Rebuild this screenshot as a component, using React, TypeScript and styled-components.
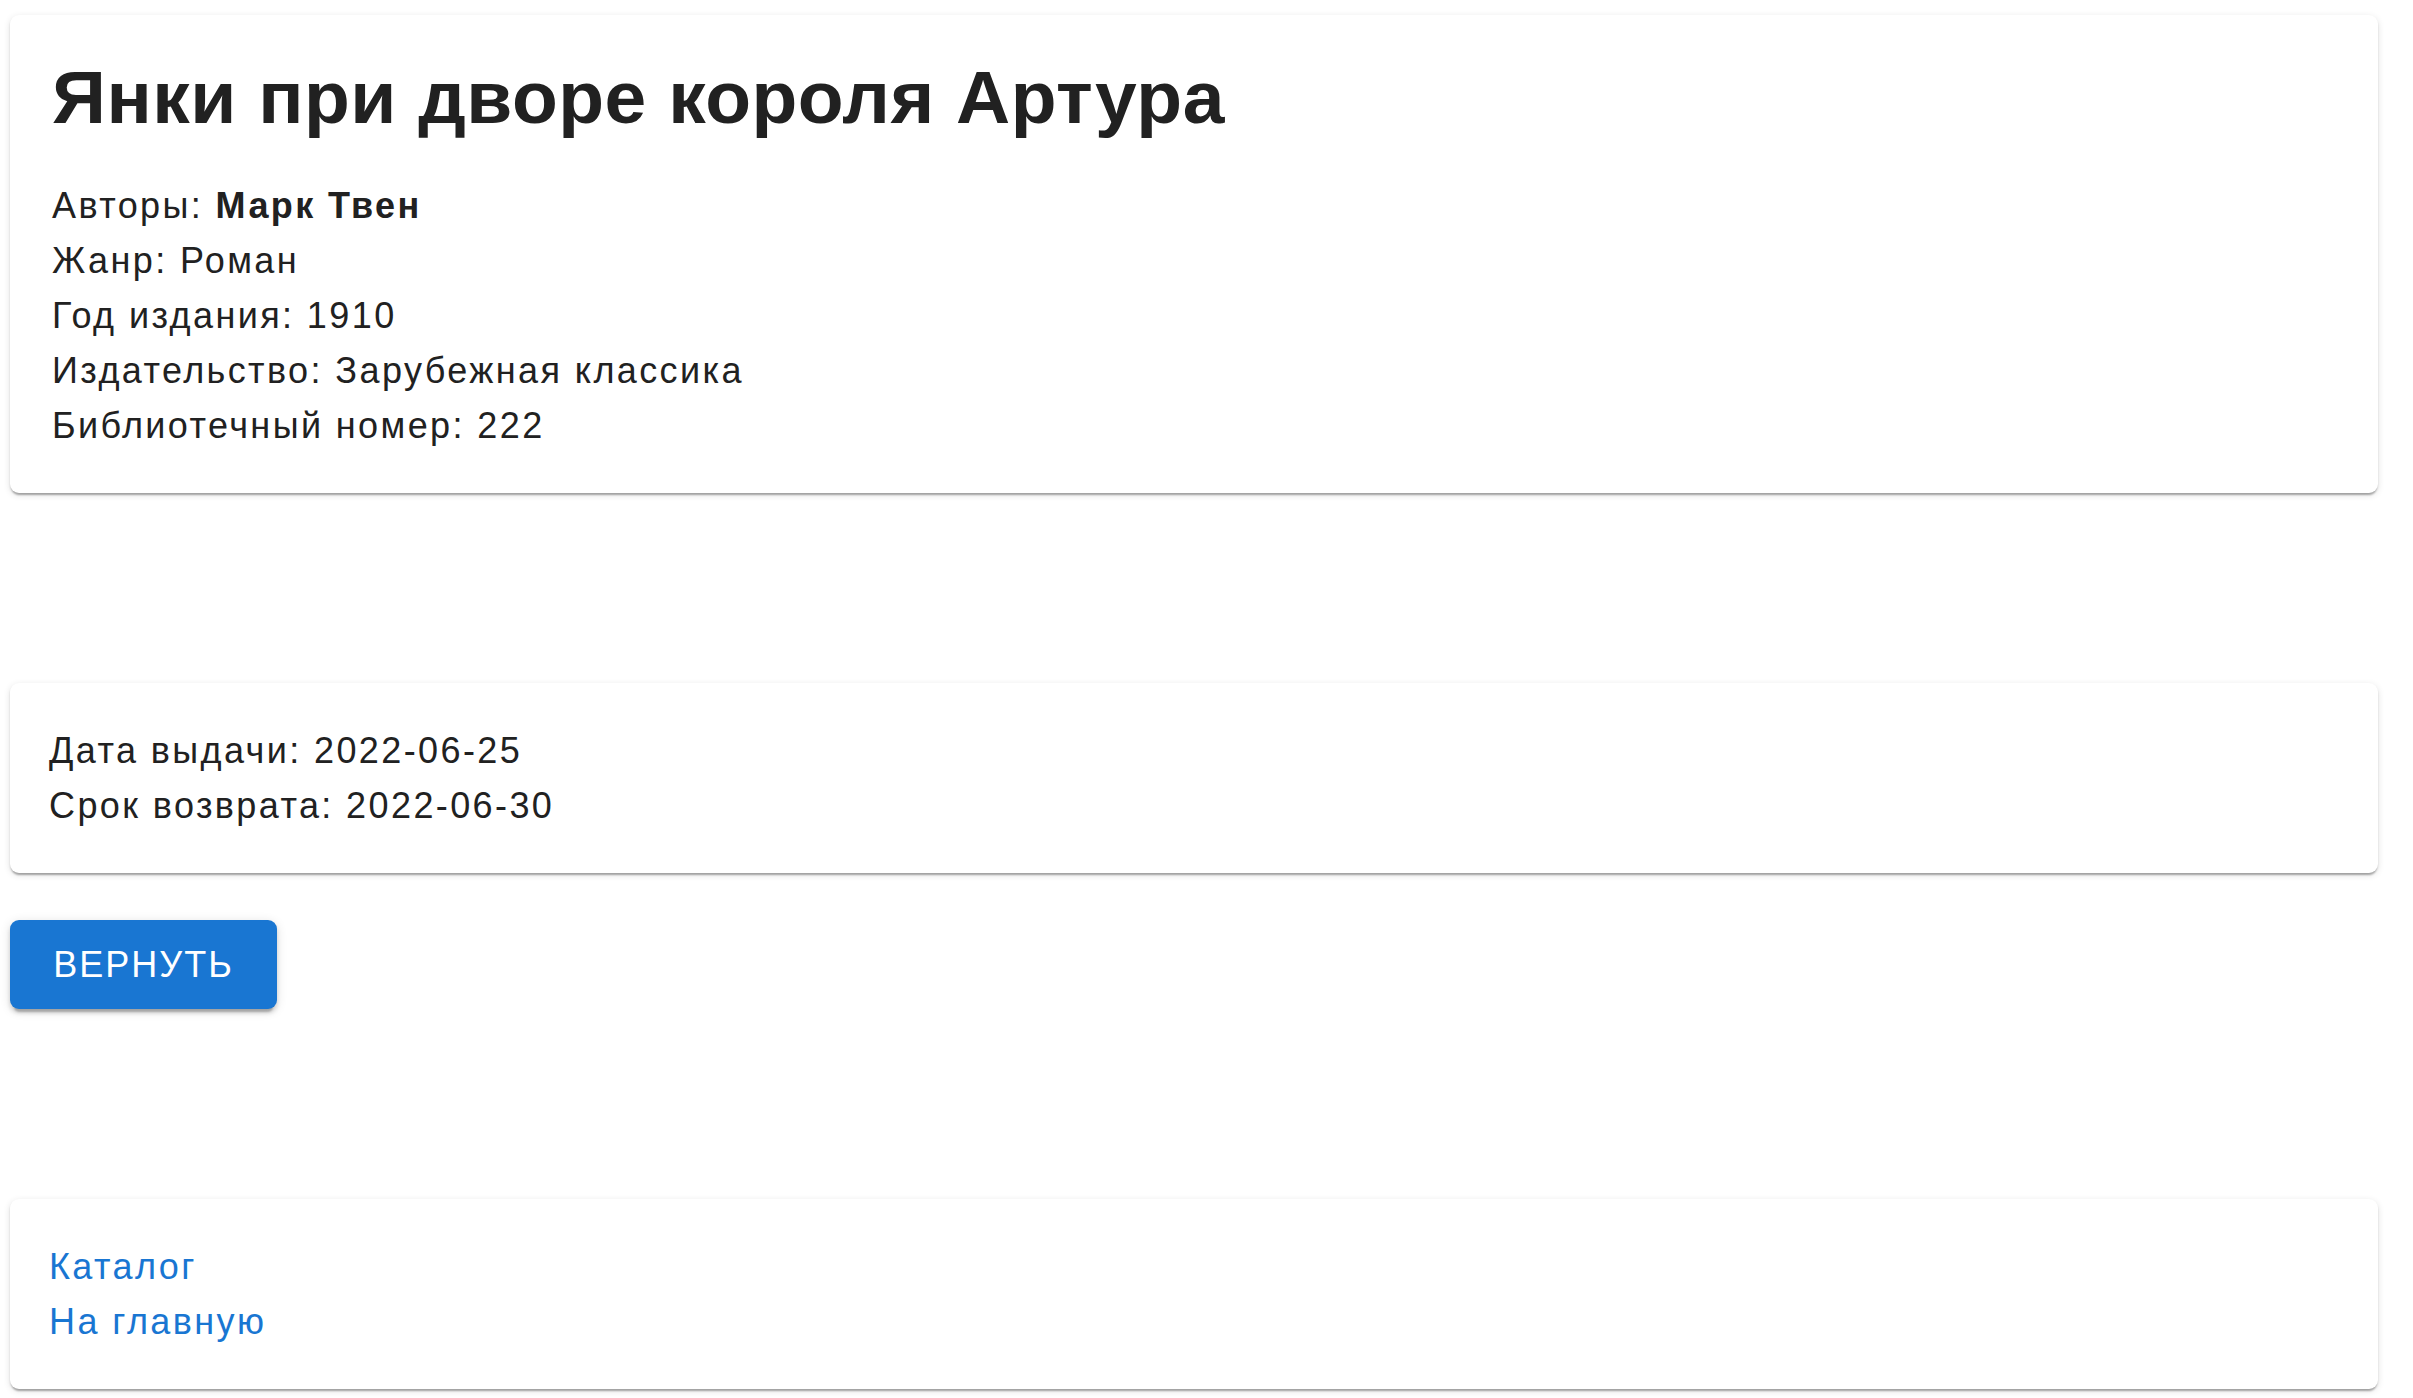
import React from "react";
import styled, { createGlobalStyle } from "styled-components";

const GlobalStyle = createGlobalStyle`
  html, body {
    margin: 0;
    padding: 0;
    background: #ffffff;
  }
  body {
    font-family: "Liberation Sans", Arial, Helvetica, sans-serif;
    color: rgba(0, 0, 0, 0.87);
  }
`;

const Page = styled.main`
  display: flex;
  flex-direction: column;
  align-items: flex-start;
  padding: 15px 35px 9px 10px;
`;

const Card = styled.section<{ $gapAfter?: number; $inset?: number }>`
  box-sizing: border-box;
  width: 100%;
  background: #ffffff;
  border-radius: 9px;
  padding: 40px 40px 40px ${(p) => p.$inset ?? 39}px;
  box-shadow: 0px 4px 2px -2px rgba(0, 0, 0, 0.2),
    0px 2px 2px 0px rgba(0, 0, 0, 0.14), 0px 2px 7px 0px rgba(0, 0, 0, 0.12);
  margin-bottom: ${(p) => p.$gapAfter ?? 0}px;
`;

const Title = styled.h1`
  margin: 0 0 39px 0;
  font-size: 75px;
  line-height: 84px;
  font-weight: 700;
  letter-spacing: 0.5px;
  color: #212121;
`;

const Line = styled.p`
  margin: 0;
  font-size: 36px;
  line-height: 55px;
  letter-spacing: 2.4px;
  color: #212121;
`;

const Strong = styled.b`
  font-weight: 700;
`;

const NavLink = styled.a`
  display: block;
  font-size: 36px;
  line-height: 55px;
  letter-spacing: 2.4px;
  color: #1976d2;
  text-decoration: none;
`;

const ReturnButton = styled.button`
  box-sizing: border-box;
  height: 89px;
  width: 267px;
  margin-bottom: 190px;
  border: none;
  border-radius: 9px;
  background: #1976d2;
  color: #ffffff;
  font-family: "Liberation Sans", Arial, Helvetica, sans-serif;
  font-size: 36px;
  font-weight: 500;
  letter-spacing: 2px;
  text-transform: uppercase;
  display: flex;
  align-items: center;
  justify-content: center;
  padding: 0;
  cursor: pointer;
  box-shadow: 0px 7px 2px -4px rgba(0, 0, 0, 0.2),
    0px 4px 4px 0px rgba(0, 0, 0, 0.14), 0px 2px 11px 0px rgba(0, 0, 0, 0.12);
`;

export default function App() {
  return (
    <>
      <GlobalStyle />
      <Page>
        <Card $gapAfter={190} $inset={42}>
          <Title>Янки при дворе короля Артура</Title>
          <Line>
            Авторы: <Strong>Марк Твен</Strong>
          </Line>
          <Line>Жанр: Роман</Line>
          <Line>Год издания: 1910</Line>
          <Line>Издательство: Зарубежная классика</Line>
          <Line>Библиотечный номер: 222</Line>
        </Card>
        <Card $gapAfter={47}>
          <Line>Дата выдачи: 2022-06-25</Line>
          <Line>Срок возврата: 2022-06-30</Line>
        </Card>
        <ReturnButton type="button">Вернуть</ReturnButton>
        <Card>
          <NavLink href="#catalog">Каталог</NavLink>
          <NavLink href="#home">На главную</NavLink>
        </Card>
      </Page>
    </>
  );
}
